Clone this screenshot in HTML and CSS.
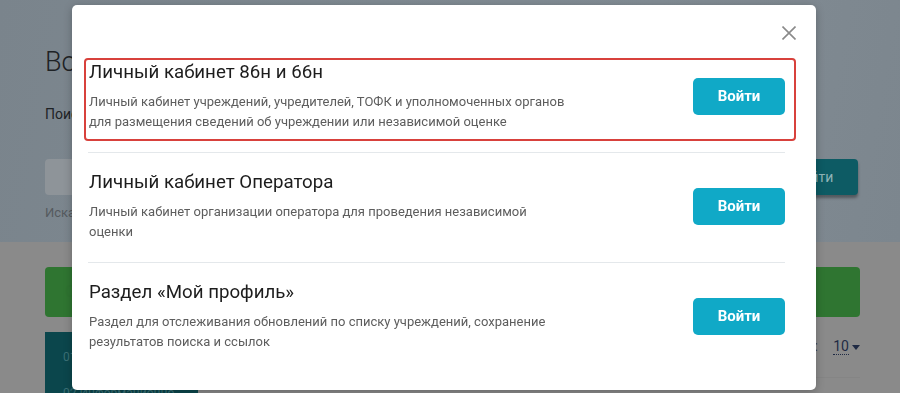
FILE: index.html
```html
<!DOCTYPE html>
<html lang="ru">
<head>
    <meta charset="UTF-8">
    <meta name="viewport" content="width=device-width, initial-scale=1.0">
    <title>Вход в личный кабинет</title>
    <link rel="stylesheet" href="styles.css">
</head>
<body>
    <div class="page">
        <div class="hero">
            <h1 class="hero-title">Вопросы и ответы</h1>
            <p class="hero-label">Поиск учреждений</p>
            <div class="search-row">
                <div class="search-input"></div>
                <button class="search-btn">Найти</button>
            </div>
            <p class="hero-hint">Искать по наименованию, ИНН или ОГРН</p>
        </div>
        <div class="content">
            <div class="banner">Обратная связь</div>
            <div class="list-row">
                <div class="cat">
                    <div class="cat-item">01 Образование</div>
                    <div class="cat-item">02 Информационно</div>
                </div>
                <div class="per-page">Кол-во строк: <span class="per-num">10</span><span class="caret"></span></div>
            </div>
        </div>
    </div>

    <div class="modal">
        <button class="modal-close" aria-label="Закрыть">
            <svg width="14" height="14" viewBox="0 0 14 14"><path d="M0.5 0.5 L13.5 13.5 M13.5 0.5 L0.5 13.5" stroke="#8a8a8a" stroke-width="1.6" fill="none"/></svg>
        </button>
        <div class="item highlight">
            <div class="item-text">
                <h2 class="item-title">Личный кабинет 86н и 66н</h2>
                <p class="item-desc">Личный кабинет учреждений, учредителей, ТОФК и уполномоченных органов<br>для размещения сведений об учреждении или независимой оценке</p>
            </div>
            <button class="btn-enter">Войти</button>
        </div>
        <div class="item">
            <div class="item-text">
                <h2 class="item-title">Личный кабинет Оператора</h2>
                <p class="item-desc">Личный кабинет организации оператора для проведения независимой<br>оценки</p>
            </div>
            <button class="btn-enter">Войти</button>
        </div>
        <div class="item">
            <div class="item-text">
                <h2 class="item-title">Раздел «Мой профиль»</h2>
                <p class="item-desc">Раздел для отслеживания обновлений по списку учреждений, сохранение<br>результатов поиска и ссылок</p>
            </div>
            <button class="btn-enter">Войти</button>
        </div>
    </div>
</body>
</html>
```

FILE: styles.css
```css
* {
    box-sizing: border-box;
}
body {
    margin: 0;
    font-family: 'Roboto', 'Liberation Sans', sans-serif;
    background-color: #8a8a8a;
    overflow: hidden;
    height: 393px;
}
.page {
    width: 900px;
}
.hero {
    height: 242px;
    padding: 40px 42px 0 45px;
    background: linear-gradient(100deg, #7a848c 0%, #7f8a92 40%, #828c94 70%, #7c868e 100%);
}
.hero-title {
    margin: 0;
    font-size: 27px;
    font-weight: 300;
    color: #1e2225;
    line-height: 44px;
}
.hero-label {
    margin: 22px 0 0;
    font-size: 14px;
    color: #1e2225;
}
.search-row {
    display: flex;
    margin-top: 37px;
    height: 36px;
}
.search-input {
    flex: 1;
    background-color: #8e9499;
    border-radius: 4px 0 0 4px;
}
.search-btn {
    width: 90px;
    border: none;
    border-radius: 0 4px 4px 0;
    background-color: #0d5b64;
    color: #8fb4b8;
    font-size: 14px;
    font-family: inherit;
    box-shadow: 0 3px 3px rgba(0, 0, 0, 0.35);
}
.hero-hint {
    margin: 10px 0 0;
    font-size: 13px;
    color: #555a5e;
}
.content {
    padding: 25px 40px 0 45px;
}
.banner {
    height: 50px;
    border-radius: 4px;
    background-color: #2f7531;
    color: #2e7330;
    padding: 15px 20px;
}
.list-row {
    display: flex;
    justify-content: space-between;
    margin-top: 15px;
}
.cat {
    width: 153px;
    background-color: #0b464c;
    padding: 18px 0 0 18px;
    height: 70px;
}
.cat-item {
    font-size: 12px;
    color: #3b7075;
    margin-bottom: 22px;
}
.per-page {
    font-size: 14px;
    color: #3a3a3a;
    padding-top: 6px;
    height: 46px;
    border-bottom: 1px solid #858585;
}
.per-num {
    margin-left: 12px;
    color: #1f2a44;
    border-bottom: 1px dotted #1f2a44;
}
.caret {
    display: inline-block;
    margin-left: 3px;
    border-left: 4px solid transparent;
    border-right: 4px solid transparent;
    border-top: 5px solid #1f2a44;
    vertical-align: middle;
}

/* модальное окно */
.modal {
    position: fixed;
    left: 72px;
    top: 5px;
    width: 744px;
    height: 385px;
    background-color: #fff;
    border-radius: 5px;
    padding: 38px 31px 20px 16px;
    box-shadow: 0 2px 8px rgba(0, 0, 0, 0.25);
}
.modal-close {
    position: absolute;
    top: 21px;
    right: 20px;
    width: 14px;
    height: 14px;
    padding: 0;
    border: none;
    background: none;
    cursor: pointer;
}
.modal-close svg {
    display: block;
}
.item {
    position: relative;
    display: flex;
    align-items: center;
    justify-content: space-between;
    padding: 17px 0 20px;
    border-top: 1px solid #e4e8eb;
}
.item:first-of-type {
    border-top: none;
}
.item.highlight::after {
    content: "";
    position: absolute;
    left: -4px;
    right: -11px;
    top: 15px;
    bottom: 11px;
    border: 2px solid #d8413c;
    border-radius: 4px;
    pointer-events: none;
}
.item-title {
    margin: 0;
    font-size: 18.7px;
    font-weight: 400;
    line-height: 24px;
    color: #1d1d1d;
    padding-left: 1px;
}
.item-desc {
    margin: 8px 0 0;
    font-size: 13px;
    line-height: 20px;
    color: #5d5d5d;
    padding-left: 1px;
}
.btn-enter {
    width: 92px;
    height: 37px;
    border: none;
    border-radius: 5px;
    background-color: #10a9c7;
    color: #fff;
    font-family: inherit;
    font-size: 15px;
    font-weight: 700;
    cursor: pointer;
}
```
